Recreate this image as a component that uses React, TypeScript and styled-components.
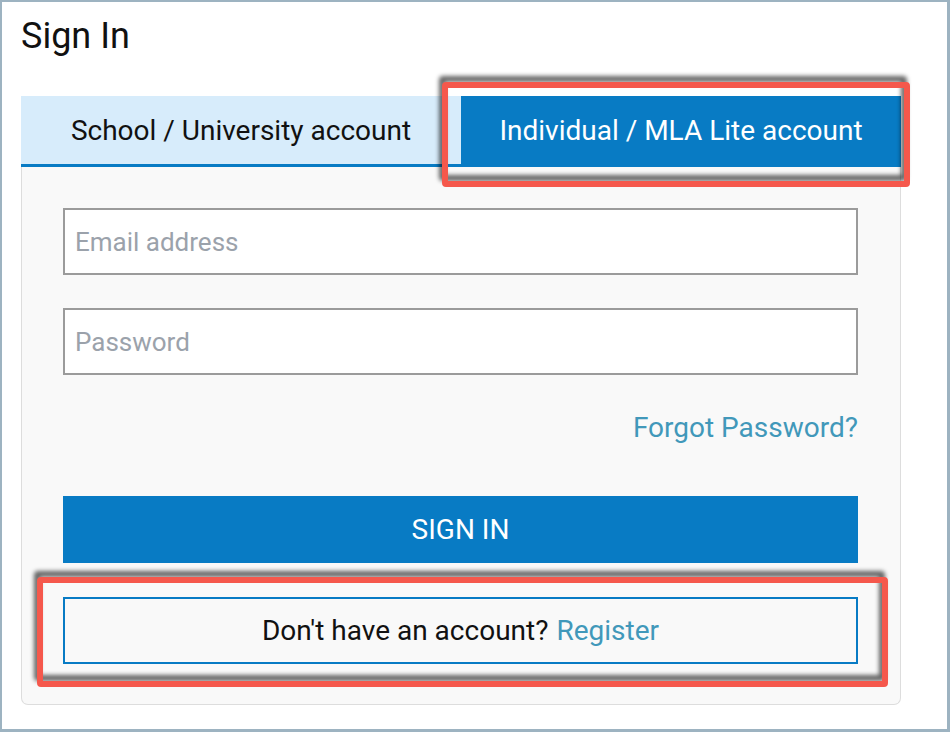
import styled, { createGlobalStyle } from 'styled-components'

const GlobalStyle = createGlobalStyle`
  html, body {
    margin: 0;
    padding: 0;
    background: #ffffff;
  }
  body {
    font-family: Roboto, "Liberation Sans", Arial, sans-serif;
  }
  * {
    box-sizing: border-box;
  }
`;

const Frame = styled.div`
  position: relative;
  width: 950px;
  height: 732px;
  border: 2px solid #9db3c1;
  border-right-width: 3px;
  border-bottom-width: 3px;
  background: #ffffff;
  padding: 0 0 0 19px;
  overflow: hidden;
`;

const Title = styled.h1`
  margin: 0;
  padding-top: 14px;
  font-size: 36px;
  line-height: 40px;
  font-weight: 400;
  color: #111111;
`;

const Card = styled.div`
  width: 880px;
  margin-top: 40px;
`;

const Tabs = styled.div`
  display: grid;
  grid-template-columns: 440px 440px;
  border-bottom: 3px solid #087bc4;
`;

const Tab = styled.button<{ $active: boolean }>`
  height: 68px;
  border: none;
  margin: 0;
  padding: 0;
  font-family: inherit;
  font-size: 28px;
  font-weight: 400;
  cursor: pointer;
  background: ${({ $active }) => $active ? '#087bc4' : '#d7ecfb'};
  color: ${({ $active }) => $active ? '#ffffff' : '#111111'};
`;

const Body = styled.div`
  display: flex;
  flex-direction: column;
  background: #f9f9f9;
  border: 1px solid #dddddd;
  border-top: none;
  border-radius: 0 0 7px 7px;
  padding: 41px 42px 40px 41px;
`;

const Input = styled.input`
  height: 67px;
  width: 100%;
  border: 2px solid #9b9b9b;
  background: #ffffff;
  padding: 0 10px;
  font-family: inherit;
  font-size: 26px;
  color: #222222;
  outline: none;
  & + & {
    margin-top: 33px;
  }
  &::placeholder {
    color: #9ba2ab;
  }
`;

const ForgotRow = styled.div`
  display: flex;
  justify-content: flex-end;
  margin-top: 38px;
  line-height: 30px;
`;

const LinkText = styled.a`
  color: #4198ba;
  font-size: 28px;
  text-decoration: none;
  cursor: pointer;
`;

const SignInButton = styled.button`
  margin-top: 53px;
  height: 67px;
  width: 100%;
  border: none;
  background: #087bc4;
  color: #ffffff;
  font-family: inherit;
  font-size: 28px;
  cursor: pointer;
`;

const RegisterBox = styled.div`
  margin-top: 34px;
  height: 67px;
  border: 2px solid #087bc4;
  display: flex;
  align-items: center;
  justify-content: center;
  font-size: 28px;
  color: #111111;
  gap: 8px;
`;

const Highlight = styled.div`
  position: absolute;
  border: 6px solid #f5584c;
  border-radius: 4px;
  pointer-events: none;
  filter: drop-shadow(-3px -6px 2px rgba(0, 0, 0, 0.6));
`;

export default function App() {
  return (
    <>
      <GlobalStyle />
      <Frame>
        <Title>Sign In</Title>
        <Card>
          <Tabs>
            <Tab $active={false}>School / University account</Tab>
            <Tab $active={true}>Individual / MLA Lite account</Tab>
          </Tabs>
          <Body>
            <Input type="email" placeholder="Email address" />
            <Input type="password" placeholder="Password" />
            <ForgotRow>
              <LinkText>Forgot Password?</LinkText>
            </ForgotRow>
            <SignInButton>SIGN IN</SignInButton>
            <RegisterBox>
              <span>Don't have an account?</span>
              <LinkText>Register</LinkText>
            </RegisterBox>
          </Body>
        </Card>
        <Highlight style={{ left: 440, top: 80, width: 468, height: 105 }} />
        <Highlight style={{ left: 35, top: 575, width: 851, height: 110 }} />
      </Frame>
    </>
  )
}
